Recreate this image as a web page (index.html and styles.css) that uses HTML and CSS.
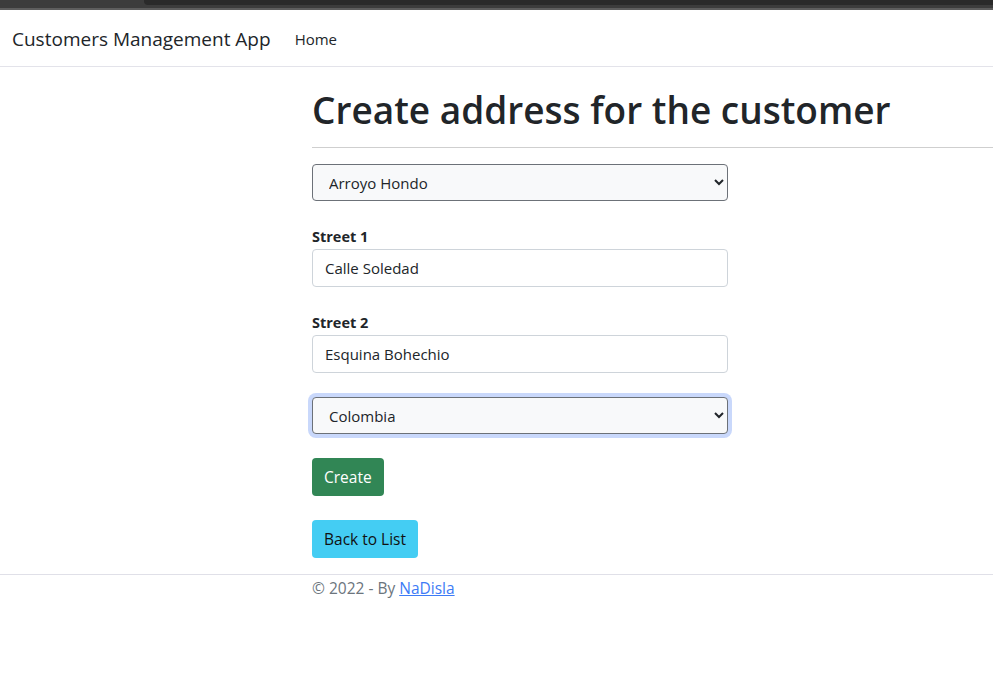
FILE: index.html
```html
<!DOCTYPE html>
<html lang="en">
<head>
<meta charset="utf-8">
<title>Create address</title>
<link rel="stylesheet" href="styles.css">
</head>
<body>
<div class="chrome"><div class="chrome-tab"></div></div>
<header class="navbar">
  <a class="brand" href="#">Customers Management App</a>
  <nav class="nav"><a class="nav-link" href="#">Home</a></nav>
</header>
<main class="main">
  <h1 class="title">Create address for the customer</h1>
  <hr class="rule">
  <form class="form">
    <select class="field select">
      <option>Arroyo Hondo</option>
    </select>
    <div class="group">
      <label class="label">Street 1</label>
      <input class="field input" type="text" value="Calle Soledad">
    </div>
    <div class="group">
      <label class="label">Street 2</label>
      <input class="field input" type="text" value="Esquina Bohechio">
    </div>
    <select class="field select focused">
      <option>Colombia</option>
    </select>
    <div class="actions">
      <button class="btn btn-create" type="button">Create</button>
      <a class="btn btn-back" href="#">Back to List</a>
    </div>
  </form>
</main>
<footer class="footer">
  <div class="footer-inner">© 2022 - By <a class="footer-link" href="#">NaDisla</a></div>
</footer>
</body>
</html>
```

FILE: styles.css
```css
* { box-sizing: border-box; }
html, body { margin: 0; padding: 0; }
body {
  font-family: "Open Sans", "Noto Sans", sans-serif;
  font-size: 15px;
  color: #212529;
  background: #fff;
  width: 993px;
  overflow: hidden;
}
.chrome {
  height: 10px;
  background: #3c3c3c;
  border-bottom: 2px solid #5e5e5e;
  display: flex;
  justify-content: flex-end;
}
.chrome-tab {
  width: 849px;
  height: 5px;
  background: #2a2a2a;
  border-bottom-left-radius: 4px;
}
.navbar {
  height: 57px;
  border-bottom: 1px solid #e3e3ea;
  display: flex;
  align-items: center;
  padding-left: 12px;
  padding-top: 2px;
}
.brand {
  font-size: 19px;
  color: #212529;
  text-decoration: none;
  margin-right: 24px;
}
.nav-link {
  font-size: 15px;
  color: #212529;
  text-decoration: none;
}
.main {
  padding-left: 312px;
}
.title {
  margin: 0;
  padding-top: 19px;
  font-size: 37px;
  font-weight: 600;
  line-height: 48px;
  color: #212529;
}
.rule {
  margin: 13px 0 16px 0;
  border: 0;
  border-top: 1px solid #cfcfcf;
  height: 0;
}
.form {
  display: flex;
  flex-direction: column;
  gap: 24px;
  width: 416px;
}
.group {
  display: flex;
  flex-direction: column;
}
.label {
  font-weight: 700;
  font-size: 14.5px;
  line-height: 24px;
  color: #212529;
}
.field {
  font-family: inherit;
  font-size: 15px;
  color: #212529;
  width: 416px;
  border-radius: 4px;
  outline: none;
}
.input {
  height: 38px;
  border: 1px solid #ced4da;
  background: #fff;
  padding: 0 12px;
}
.select {
  height: 37px;
  border: 1px solid #6c7178;
  background: #f8f9fa;
  padding: 0 12px;
}
.focused {
  box-shadow: 0 0 0 4px #c9d8fb;
}
.actions {
  display: flex;
  flex-direction: column;
  align-items: flex-start;
  gap: 24px;
}
.btn {
  display: inline-flex;
  align-items: center;
  height: 38px;
  padding: 0 12px;
  border: 0;
  border-radius: 4px;
  font-family: inherit;
  font-size: 15.5px;
  text-decoration: none;
}
.btn-create {
  background: #318655;
  color: #fff;
}
.btn-back {
  background: #44cdf3;
  color: #111;
}
.footer {
  margin-top: 16px;
  border-top: 1px solid #e0e0e8;
}
.footer-inner {
  padding-left: 312px;
  line-height: 24px;
  padding-top: 1px;
  color: #6c757d;
  font-size: 15.5px;
}
.footer-link {
  color: #3d7bf6;
}
```
